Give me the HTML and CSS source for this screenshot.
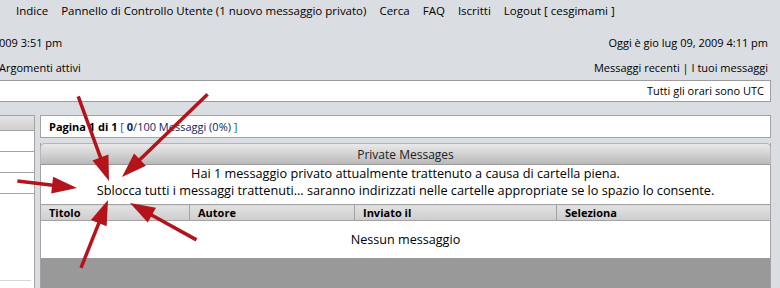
FILE: index.html
```html
<!DOCTYPE html>
<html lang="it">
<head>
  <meta charset="UTF-8">
  <meta name="viewport" content="width=device-width, initial-scale=1.0">
  <title>Messaggi privati</title>
  <link rel="stylesheet" href="styles.css">
</head>
<body>
  <div class="page">
    <nav class="topnav">
      <a href="#">Indice</a>
      <a href="#">Pannello di Controllo Utente (1 nuovo messaggio privato)</a>
      <a href="#">Cerca</a>
      <a href="#">FAQ</a>
      <a href="#">Iscritti</a>
      <a href="#">Logout [ cesgimami ]</a>
    </nav>

    <div class="info-row first">
      <span class="clipped">009 3:51 pm</span>
      <span>Oggi è gio lug 09, 2009 4:11 pm</span>
    </div>
    <div class="info-row second">
      <a href="#" class="clipped">Argomenti attivi</a>
      <span><a href="#">Messaggi recenti</a> | <a href="#">I tuoi messaggi</a></span>
    </div>

    <div class="timebar">Tutti gli orari sono UTC</div>

    <div class="layout">
      <aside class="sidebox">
        <div class="sidebox-head"></div>
        <div class="sidebox-row"></div>
        <div class="sidebox-row"></div>
        <div class="sidebox-row"></div>
        <div class="sidebox-fill"></div>
        <div class="sidebox-sep"></div>
      </aside>

      <main class="main">
        <div class="pagination">
          <b>Pagina 1 di 1</b> <span class="bracket">[</span> <span class="quota"><b>0</b>/100 Messaggi (0%)</span> <span class="bracket">]</span>
        </div>

        <section class="panel">
          <h2 class="panel-head">Private Messages</h2>
          <div class="panel-notice">
            <p>Hai 1 messaggio privato attualmente trattenuto a causa di cartella piena.</p>
            <p><a href="#">Sblocca tutti i messaggi trattenuti...</a> saranno indirizzati nelle cartelle appropriate se lo spazio lo consente.</p>
          </div>
          <table class="pm-table">
            <thead>
              <tr>
                <th class="col-title">Titolo</th>
                <th class="col-author">Autore</th>
                <th class="col-date">Inviato il</th>
                <th>Seleziona</th>
              </tr>
            </thead>
            <tbody>
              <tr>
                <td colspan="4" class="empty">Nessun messaggio</td>
              </tr>
            </tbody>
          </table>
          <div class="panel-foot"></div>
        </section>
      </main>
    </div>

    <!-- annotation arrows drawn over the screenshot -->
    <svg class="arrows" width="780" height="288" viewBox="0 0 780 288">
      <g transform="translate(109 181) rotate(70)">
        <line x1="-90" y1="0" x2="-20" y2="0"/>
        <polygon points="0,0 -25,-8.5 -25,8.5"/>
      </g>
      <g transform="translate(122 177) rotate(136)">
        <line x1="-119" y1="0" x2="-20" y2="0"/>
        <polygon points="0,0 -25,-8.5 -25,8.5"/>
      </g>
      <g transform="translate(77 188) rotate(6.6)">
        <line x1="-60" y1="0" x2="-20" y2="0"/>
        <polygon points="0,0 -25,-8.5 -25,8.5"/>
      </g>
      <g transform="translate(108 200) rotate(-68.3)">
        <line x1="-73" y1="0" x2="-20" y2="0"/>
        <polygon points="0,0 -25,-8.5 -25,8.5"/>
      </g>
      <g transform="translate(130 203) rotate(-151)">
        <line x1="-76" y1="0" x2="-20" y2="0"/>
        <polygon points="0,0 -25,-8.5 -25,8.5"/>
      </g>
    </svg>
  </div>
</body>
</html>
```

FILE: styles.css
```css
body {
  margin: 0;
  background: #dadde1;
  font-family: "Open Sans", "DejaVu Sans", sans-serif;
  font-size: 11px;
  color: #000;
}

a {
  color: #000;
  text-decoration: none;
}

.page {
  position: relative;
  width: 780px;
  height: 288px;
  overflow: hidden;
}

.topnav {
  display: flex;
  gap: 13px;
  height: 20px;
  align-items: center;
  padding-left: 16px;
  font-size: 11.5px;
}

.info-row {
  display: flex;
  justify-content: space-between;
  line-height: 16px;
  padding-right: 12px;
}

.info-row.first {
  margin-top: 15px;
}

.info-row.second {
  margin-top: 9px;
}

.clipped {
  margin-left: -1px;
}

.timebar {
  margin: 4px 9px 0 0;
  height: 20px;
  line-height: 20px;
  background: #fff;
  border: 1px solid #9c9c9c;
  border-left: none;
  text-align: right;
  padding-right: 6px;
}

.layout {
  display: grid;
  grid-template-columns: 35px 731px;
  column-gap: 5px;
  margin-top: 13px;
}

/* left column, mostly out of frame */
.sidebox {
  background: #fff;
  border: 1px solid #a3a3a3;
  border-left: none;
  border-bottom: none;
  height: 180px;
}

.sidebox-head {
  height: 14px;
  background: linear-gradient(#e4e4e4, #cfcfcf);
  border-bottom: 1px solid #a3a3a3;
}

.sidebox-row {
  height: 20px;
  border-bottom: 1px solid #a3a3a3;
}

.sidebox-fill {
  height: 86px;
}

.sidebox-sep {
  width: 31px;
  border-top: 1px solid #d6d6d6;
}

.pagination {
  height: 21px;
  line-height: 21px;
  background: #fff;
  border: 1px solid #a3a3a3;
  padding-left: 8px;
}

.bracket {
  color: #1a4fa0;
}

.quota {
  color: #14245a;
}

.panel {
  margin-top: 5px;
  border-left: 1px solid #a3a3a3;
  border-right: 1px solid #a3a3a3;
}

.panel-head {
  margin: 0 -1px;
  height: 20px;
  line-height: 22px;
  font-size: 12px;
  font-weight: normal;
  text-align: center;
  color: #222;
  border: 1px solid #b5b5b5;
  border-bottom-color: #9a9a9a;
  border-radius: 5px 5px 0 0;
  background: linear-gradient(#e9e9e9, #d2d2d2 50%, #b9b9b9);
}

.panel-notice {
  background: #fff;
  text-align: center;
  font-size: 12.7px;
  line-height: 17px;
  padding: 0 0 5px;
}

.panel-notice p {
  margin: 0;
}

.pm-table {
  width: 100%;
  border-collapse: collapse;
  background: #fff;
}

.pm-table th {
  height: 15px;
  padding: 0 8px;
  text-align: left;
  font-size: 11px;
  border-top: 1px solid #a3a3a3;
  border-bottom: 1px solid #a3a3a3;
  border-left: 1px solid #a3a3a3;
  background: linear-gradient(#e2e2e2, #cdcdcd);
}

.pm-table th:first-child {
  border-left: none;
}

.col-title {
  width: 132px;
}

.col-author {
  width: 148px;
}

.col-date {
  width: 185px;
}

.pm-table .empty {
  height: 37px;
  padding: 0;
  text-align: center;
  font-size: 12.6px;
}

.panel-foot {
  height: 40px;
  background: #999;
}

.arrows {
  position: absolute;
  left: 0;
  top: 0;
  pointer-events: none;
}

.arrows line {
  stroke: #b3141b;
  stroke-width: 3.5;
}

.arrows polygon {
  fill: #b3141b;
}
```
